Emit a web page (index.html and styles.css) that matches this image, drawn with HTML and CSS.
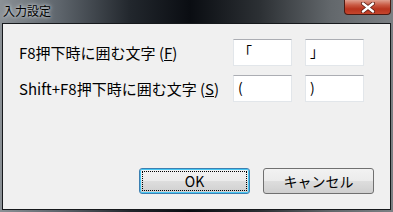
FILE: index.html
```html
<!doctype html>
<html>
<head>
	<title>入力設定</title>
	<link rel="stylesheet" href="styles.css">
</head>
<body>
	<div class="window">
		<div class="titlebar">
			<span class="title">入力設定</span>
			<div class="btn-close">
				<svg width="16" height="11" viewBox="0 0 16 11">
					<path d="M3 1.5 L13 9.5 M13 1.5 L3 9.5" stroke="#5a1a10" stroke-width="4" stroke-linecap="round"/>
					<path d="M3 1.5 L13 9.5 M13 1.5 L3 9.5" stroke="#ffffff" stroke-width="2.4" stroke-linecap="round"/>
				</svg>
			</div>
		</div>
		<div class="client">
			<div class="form">
				<label class="name">F8押下時に囲む文字 (<u>F</u>)</label>
				<div class="field">「</div>
				<div class="field">」</div>
				<label class="name">Shift+F8押下時に囲む文字 (<u>S</u>)</label>
				<div class="field">(</div>
				<div class="field">)</div>
			</div>
			<div class="buttons">
				<div class="btn btn-ok"><span>OK</span></div>
				<div class="btn"><span>キャンセル</span></div>
			</div>
		</div>
	</div>
</body>
</html>
```
FILE: styles.css
```css
body
{
	margin:0;
	font-family:"Noto Sans CJK JP", "Liberation Sans", sans-serif;
}
.window
{
	width:393px;
	height:212px;
	display:flex;
	flex-direction:column;
	background:linear-gradient(90deg, #8b9196 0px, #5d646b 60px, #22272d 130px, #0a0d12 190px, #2c3034 260px, #62676b 330px, #7c8084 393px);
}
.titlebar
{
	height:23px;
	display:flex;
	justify-content:space-between;
	align-items:flex-start;
}
.title
{
	margin:3px 0 0 3px;
	font-size:12px;
	line-height:15px;
	color:#000;
	text-shadow:0 0 5px #d8dde2, 0 0 3px #c8cdd2;
}
.btn-close
{
	width:45px;
	height:14px;
	margin-right:2px;
	border:1px solid #4a1a12;
	border-top:none;
	border-radius:0 0 4px 4px;
	background:linear-gradient(#e0a090 0px, #c95a44 5px, #b8341e 9px, #c84a30 15px);
	display:flex;
	justify-content:center;
	align-items:center;
}
.client
{
	flex:1;
	margin:0 2px 2px 2px;
	border:1px solid #16191c;
	background-color:#f0f0f0;
	display:flex;
	flex-direction:column;
	justify-content:space-between;
}
.form
{
	display:grid;
	grid-template-columns:201px 59px 59px;
	column-gap:13px;
	row-gap:9px;
	align-items:center;
	padding:15px 0 0 16px;
}
.name
{
	font-size:15px;
	color:#000;
	white-space:nowrap;
}
.field
{
	height:25px;
	border:1px solid #e2e6ea;
	border-top-color:#abadb3;
	background-color:#fff;
	font-size:14px;
	line-height:22px;
	padding-left:4px;
}
.buttons
{
	display:flex;
	justify-content:flex-end;
	gap:13px;
	padding:0 16px 15px 0;
}
.btn
{
	width:109px;
	height:24px;
	border:1px solid #707070;
	border-radius:3px;
	background:linear-gradient(#f2f2f2 0%, #ebebeb 48%, #dddddd 52%, #cfcfcf 100%);
	display:flex;
	justify-content:center;
	align-items:center;
	font-size:14px;
	color:#000;
}
.btn-ok
{
	border-color:#3c7fb1;
	box-shadow:inset 0 0 0 1px #48c8f4;
}
.btn-ok span
{
	display:flex;
	justify-content:center;
	align-items:center;
	width:103px;
	height:18px;
	border:1px dotted #000;
}
```
